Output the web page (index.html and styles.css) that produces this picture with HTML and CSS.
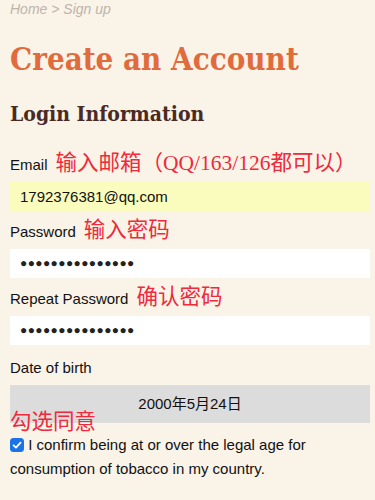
FILE: index.html
```html
<!DOCTYPE html>
<html lang="zh">
<head>
<meta charset="utf-8">
<link rel="stylesheet" href="styles.css">
</head>
<body>
<div class="page">
  <div class="crumb">Home &gt; Sign up</div>
  <h1 class="title">Create an Account</h1>
  <h2 class="subtitle">Login Information</h2>

  <div class="field field-first">
    <div class="label-row"><span class="label">Email</span><span class="note">输入邮箱（QQ/163/126都可以）</span></div>
    <div class="input input-email">1792376381@qq.com</div>
  </div>

  <div class="field">
    <div class="label-row"><span class="label">Password</span><span class="note">输入密码</span></div>
    <div class="input dots">●●●●●●●●●●●●●●●</div>
  </div>

  <div class="field">
    <div class="label-row"><span class="label">Repeat Password</span><span class="note">确认密码</span></div>
    <div class="input dots">●●●●●●●●●●●●●●●</div>
  </div>

  <div class="field">
    <div class="label-row label-solo"><span class="label">Date of birth</span></div>
    <div class="date-wrap">
      <div class="date">2000年5月24日</div>
      <span class="note note-over">勾选同意</span>
    </div>
  </div>

  <p class="confirm"><span class="check"><svg viewBox="0 0 14 14" width="14" height="14"><rect x="0" y="0" width="14" height="14" rx="3.5" fill="#1a73e8"/><path d="M3.6 7.3 L6 9.6 L10.5 4.6" fill="none" stroke="#fff" stroke-width="1.8" stroke-linecap="round" stroke-linejoin="round"/></svg></span> I confirm being at or over the legal age for consumption of tobacco in my country.</p>
</div>
</body>
</html>
```

FILE: styles.css
```css
html, body {
  margin: 0;
  padding: 0;
  background: #faf3e8;
}
.page {
  padding: 0 5px 0 10px;
  font-family: "Liberation Sans", Arial, sans-serif;
  color: #111;
}
.crumb {
  font-style: italic;
  font-size: 14px;
  line-height: 18px;
  color: #bdb5ab;
  margin-top: 0;
}
.title {
  font-family: "DejaVu Serif Condensed", "DejaVu Serif", "Liberation Serif", serif;
  font-stretch: condensed;
  font-weight: bold;
  font-size: 31px;
  line-height: 40px;
  color: #e06c3e;
  margin: 21px 0 0;
}
.subtitle {
  font-family: "DejaVu Serif Condensed", "DejaVu Serif", "Liberation Serif", serif;
  font-stretch: condensed;
  font-weight: bold;
  font-size: 21px;
  line-height: 28px;
  color: #4a2a22;
  margin: 21px 0 0;
}
.field {
  margin-top: 6px;
}
.field-first {
  margin-top: 22px;
}
.label-row {
  display: flex;
  align-items: baseline;
  gap: 8px;
  height: 26px;
}
.label-solo {
  height: 24px;
  padding-top: 4px;
}
.label {
  font-size: 15px;
  line-height: 26px;
}
.note {
  font-family: "Liberation Serif", "Noto Sans CJK SC", serif;
  font-size: 21.5px;
  line-height: 26px;
  color: #ee2a3c;
}
.input {
  margin-top: 6px;
  height: 29px;
  box-sizing: border-box;
  background: #fff;
  font-size: 15px;
  line-height: 29px;
  padding: 0 10px;
  color: #111;
}
.input-email {
  background: #fafcbd;
}
.dots {
  font-size: 12px;
  letter-spacing: 0.4px;
  color: #222;
}
.date-wrap {
  position: relative;
  margin-top: 6px;
}
.date {
  height: 38px;
  background: #dcdcdc;
  font-size: 15px;
  line-height: 38px;
  text-align: center;
  font-family: "Liberation Sans", "Noto Sans CJK SC", sans-serif;
}
.note-over {
  position: absolute;
  left: 0;
  top: 24px;
}
.confirm {
  margin: 10px 0 0;
  font-size: 15px;
  line-height: 24px;
}
.check {
  display: inline-block;
  width: 14px;
  height: 14px;
  vertical-align: -2px;
}
.check svg {
  display: block;
}
```
